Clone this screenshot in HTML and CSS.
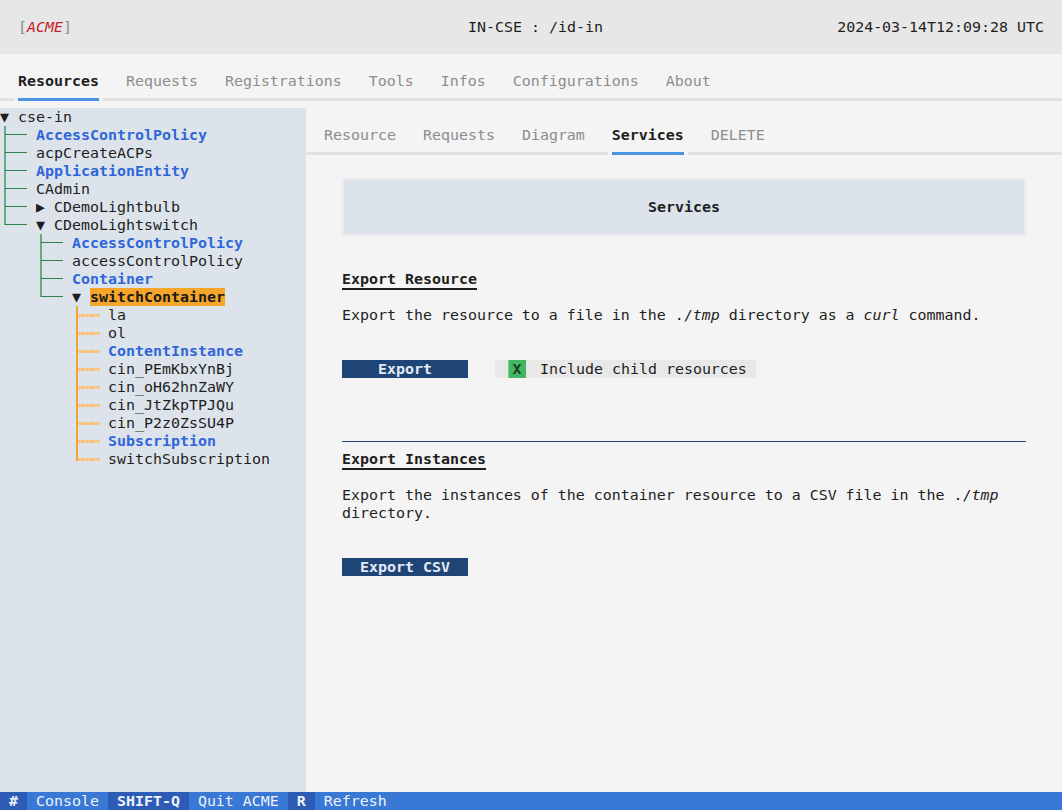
FILE: index.html
```html
<!DOCTYPE html>
<html lang="en">
<head>
<meta charset="utf-8">
<title>ACME</title>
<link rel="stylesheet" href="styles.css">
</head>
<body>
<div class="app">
  <header class="header">
    <div class="brand"><span class="br">[</span><span class="acme">ACME</span><span class="br">]</span></div>
    <div class="title">IN-CSE : /id-in</div>
    <div class="clock">2024-03-14T12:09:28 UTC</div>
  </header>

  <nav class="topnav">
    <div class="tablist">
      <div class="tab active">Resources</div>
      <div class="tab">Requests</div>
      <div class="tab">Registrations</div>
      <div class="tab">Tools</div>
      <div class="tab">Infos</div>
      <div class="tab">Configurations</div>
      <div class="tab">About</div>
    </div>
  </nav>

  <div class="main">
    <aside class="tree">
      <div class="row"><span class="t">▼ cse-in</span></div>
      <div class="row"><span class="g tee"></span><span class="t res">AccessControlPolicy</span></div>
      <div class="row"><span class="g tee"></span><span class="t">acpCreateACPs</span></div>
      <div class="row"><span class="g tee"></span><span class="t res">ApplicationEntity</span></div>
      <div class="row"><span class="g tee"></span><span class="t">CAdmin</span></div>
      <div class="row"><span class="g tee"></span><span class="t">▶ CDemoLightbulb</span></div>
      <div class="row"><span class="g elbow"></span><span class="t">▼ CDemoLightswitch</span></div>
      <div class="row"><span class="g"></span><span class="g tee"></span><span class="t res">AccessControlPolicy</span></div>
      <div class="row"><span class="g"></span><span class="g tee"></span><span class="t">accessControlPolicy</span></div>
      <div class="row"><span class="g"></span><span class="g tee"></span><span class="t res">Container</span></div>
      <div class="row"><span class="g"></span><span class="g elbow"></span><span class="t">▼ </span><span class="t sel">switchContainer</span></div>
      <div class="row"><span class="g"></span><span class="g"></span><span class="g tee o"></span><span class="t">la</span></div>
      <div class="row"><span class="g"></span><span class="g"></span><span class="g tee o"></span><span class="t">ol</span></div>
      <div class="row"><span class="g"></span><span class="g"></span><span class="g tee o"></span><span class="t res">ContentInstance</span></div>
      <div class="row"><span class="g"></span><span class="g"></span><span class="g tee o"></span><span class="t">cin_PEmKbxYnBj</span></div>
      <div class="row"><span class="g"></span><span class="g"></span><span class="g tee o"></span><span class="t">cin_oH62hnZaWY</span></div>
      <div class="row"><span class="g"></span><span class="g"></span><span class="g tee o"></span><span class="t">cin_JtZkpTPJQu</span></div>
      <div class="row"><span class="g"></span><span class="g"></span><span class="g tee o"></span><span class="t">cin_P2z0ZsSU4P</span></div>
      <div class="row"><span class="g"></span><span class="g"></span><span class="g tee o"></span><span class="t res">Subscription</span></div>
      <div class="row"><span class="g"></span><span class="g"></span><span class="g elbow o"></span><span class="t">switchSubscription</span></div>
    </aside>

    <section class="content">
      <nav class="subnav">
        <div class="tablist">
          <div class="tab">Resource</div>
          <div class="tab">Requests</div>
          <div class="tab">Diagram</div>
          <div class="tab active">Services</div>
          <div class="tab">DELETE</div>
        </div>
      </nav>

      <div class="panel">
        <div class="svc-box">Services</div>

        <div class="heading first"><span>Export Resource</span></div>
        <p class="desc">Export the resource to a file in the ./<em>tmp</em> directory as a <em>curl</em> command.</p>
        <div class="actions">
          <div class="btn">Export</div>
          <div class="check"><span class="box">X</span><span>Include child resources</span></div>
        </div>

        <div class="rule"></div>

        <div class="heading"><span>Export Instances</span></div>
        <p class="desc">Export the instances of the container resource to a CSV file in the ./<em>tmp</em> directory.</p>
        <div class="actions">
          <div class="btn">Export CSV</div>
        </div>
      </div>
    </section>
  </div>

  <footer class="footer"><span class="key"> # </span><span class="d"> Console </span><span class="key"> SHIFT-Q </span><span class="d"> Quit ACME </span><span class="key"> R </span><span class="d"> Refresh </span></footer>
</div>
</body>
</html>
```

FILE: styles.css
```css
* { box-sizing: border-box; }

body {
  margin: 0;
  font-family: "DejaVu Sans Mono", "Liberation Mono", monospace;
  font-size: 14.95px;
  line-height: 18px;
  color: #1e1e1e;
  background: #f4f4f4;
}

.app {
  width: 1062px;
  height: 810px;
  display: flex;
  flex-direction: column;
  overflow: hidden;
}

/* header */
.header {
  flex: none;
  height: 54px;
  padding: 0 18px;
  background: #e7e7e7;
  display: grid;
  grid-template-columns: 1fr auto 1fr;
  align-items: center;
  white-space: pre;
}
.brand .br { color: #8c8c8c; }
.brand .acme { color: #c3222c; font-style: italic; }
.title { padding-left: 9px; }
.clock { justify-self: end; }

/* tab bars */
.topnav, .subnav {
  flex: none;
  height: 54px;
  padding-top: 18px;
  background: linear-gradient(#e1e1e1, #e1e1e1) 0 44px / 100% 3px no-repeat, #f4f4f4;
}
.tablist {
  display: flex;
  gap: 27px;
  padding-left: 18px;
}
.tab {
  height: 36px;
  color: #8d8d8d;
  white-space: pre;
}
.tab.active {
  color: #1e1e1e;
  font-weight: bold;
  margin: 0 -4px;
  padding: 0 4px;
  background:
    linear-gradient(#4a93e2, #4a93e2) 4px 26px / calc(100% - 8px) 3px no-repeat,
    linear-gradient(#f4f4f4, #f4f4f4) 0 26px / 100% 3px no-repeat;
}

/* main split */
.main {
  flex: 1;
  min-height: 0;
  display: flex;
}
.tree {
  flex: none;
  width: 306px;
  background: #dce3ea;
}
.content {
  flex: 1;
  background: #f4f4f4;
}

/* tree */
.row {
  display: flex;
  height: 18px;
  line-height: 18px;
}
.t { white-space: pre; }
.t.res { color: #2f66d9; font-weight: bold; }
.t.sel { background: #f5a62a; font-weight: bold; color: #1a1a1a; }

.g {
  flex: none;
  width: 36px;
  height: 18px;
}
.g.tee {
  background:
    linear-gradient(#2f7f4f, #2f7f4f) 5px 8px / 22px 1px no-repeat,
    linear-gradient(#62ad80, #62ad80) 4px 0 / 2px 18px no-repeat;
}
.g.elbow {
  background:
    linear-gradient(#2f7f4f, #2f7f4f) 5px 8px / 22px 1px no-repeat,
    linear-gradient(#62ad80, #62ad80) 4px 0 / 2px 9px no-repeat;
}
.g.tee.o {
  background:
    repeating-linear-gradient(90deg, #f6c787 0 4px, #f0b25a 4px 5px, #f6c787 5px 9px) 6px 8px / 22px 3px no-repeat,
    linear-gradient(#f3a531, #f3a531) 4px 0 / 2px 18px no-repeat;
}
.g.elbow.o {
  background:
    repeating-linear-gradient(90deg, #f6c787 0 4px, #f0b25a 4px 5px, #f6c787 5px 9px) 6px 8px / 22px 3px no-repeat,
    linear-gradient(#f3a531, #f3a531) 4px 0 / 2px 11px no-repeat;
}

/* services panel */
.panel {
  padding: 0 36px;
}
.svc-box {
  margin-top: 16px;
  height: 58px;
  border: 2px solid #ebebeb;
  background: #dce3ea;
  display: flex;
  align-items: center;
  justify-content: center;
  font-weight: bold;
}
.heading {
  height: 18px;
}
.heading.first { margin-top: 34px; }
.heading span {
  display: inline-block;
  font-weight: bold;
  line-height: 18px;
  border-bottom: 2px solid #1e1e1e;
  white-space: pre;
}
.desc {
  margin: 18px 0 0;
}
.desc em { font-style: italic; }

.actions {
  margin-top: 36px;
  display: flex;
  height: 18px;
}
.btn {
  width: 126px;
  background: #1f4476;
  color: #e3ebf5;
  font-weight: bold;
  text-align: center;
  white-space: pre;
}
.check {
  margin-left: 27px;
  display: flex;
  padding: 0 9px 0 13px;
  background: #e8e8e8;
  white-space: pre;
}
.check .box {
  width: 18px;
  margin-right: 14px;
  background: #43b663;
  box-shadow: inset 1px 0 0 #7fd093;
  color: #173f23;
  font-weight: bold;
  text-align: center;
}

.rule {
  margin-top: 63px;
  margin-bottom: 8px;
  height: 1px;
  background: #1f4476;
}

/* footer */
.footer {
  flex: none;
  height: 18px;
  display: flex;
  background: #3a78d6;
  color: #eef3fb;
  white-space: pre;
}
.footer .key {
  background: #2c5cb5;
  font-weight: bold;
}
```
